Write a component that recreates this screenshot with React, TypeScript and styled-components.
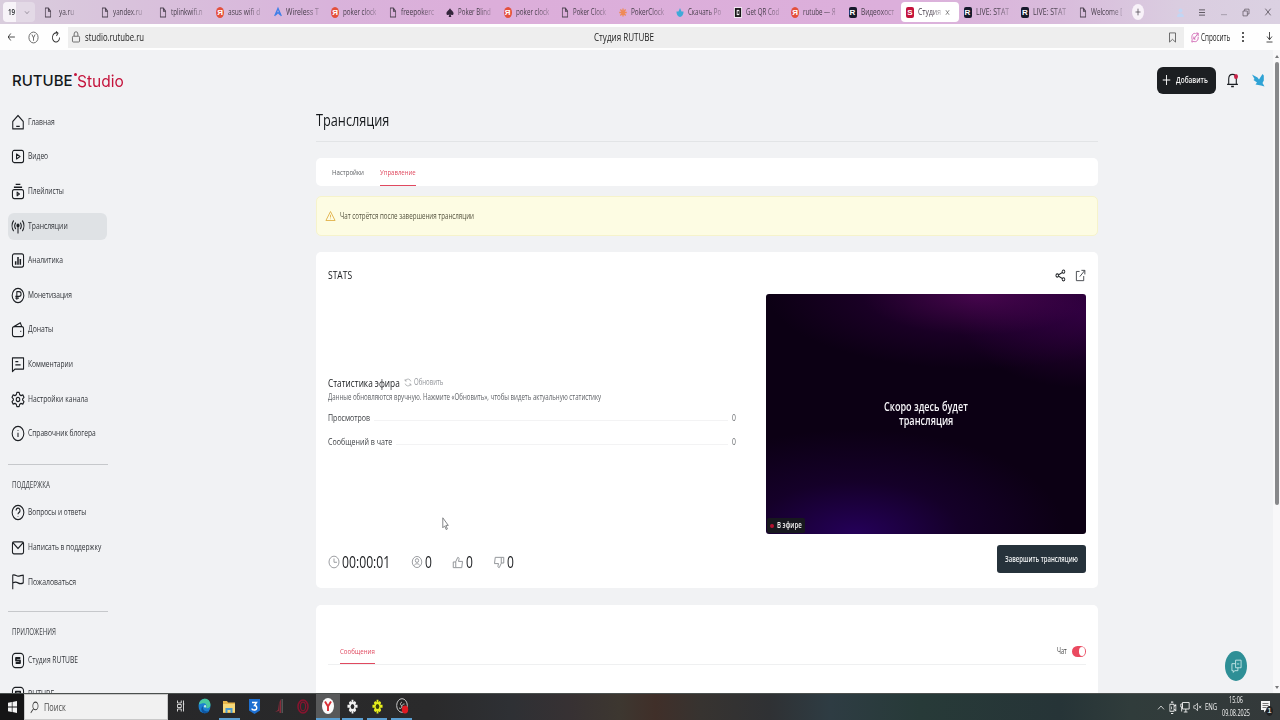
import React, { useLayoutEffect, useRef, useState } from "react";
import styled, { createGlobalStyle } from "styled-components";

const GlobalStyle = createGlobalStyle`
  *, *::before, *::after { box-sizing: border-box; }
  html, body { margin: 0; padding: 0; }
  body { width: 1280px; height: 720px; overflow: hidden; background: #f1f2f4; font-family: "Open Sans", "Noto Sans", sans-serif; }
`;

/* ---------- condensed text ---------- */

const FitBox = styled.span<{ $w: number }>`
  display: flex;
  align-items: center;
  flex: none;
  width: ${(p) => p.$w}px;
  overflow: visible;
`;

const FitInner = styled.span<{ $size: number; $color: string; $weight: number; $font?: string }>`
  display: block;
  flex: none;
  white-space: nowrap;
  transform-origin: 0 50%;
  font-size: ${(p) => p.$size}px;
  line-height: 1.2;
  font-weight: ${(p) => p.$weight};
  color: ${(p) => p.$color};
  font-family: ${(p) => p.$font || "inherit"};
`;

type TextProps = {
  w: number;
  size?: number;
  color?: string;
  weight?: number;
  font?: string;
  children: string;
};

function Text({ w, size = 9, color = "#24272b", weight = 400, font, children }: TextProps) {
  const ref = useRef<HTMLSpanElement>(null);
  const [k, setK] = useState(0.76);
  useLayoutEffect(() => {
    if (ref.current && ref.current.offsetWidth) {
      setK(w / ref.current.offsetWidth);
    }
  }, [w, children]);
  return (
    <FitBox $w={w}>
      <FitInner ref={ref} $size={size} $color={color} $weight={weight} $font={font} style={{ transform: `scaleX(${k})` }}>
        {children}
      </FitInner>
    </FitBox>
  );
}

/* ---------- icons ---------- */

const Svg = styled.svg`
  display: block;
  flex: none;
  overflow: visible;
`;

type IconProps = { name: string; w?: number; h?: number; color?: string; sw?: number };

const glyphs: Record<string, React.ReactNode> = {
  home: <path d="M3 21V10.500L12 2l9 8.500V21zM9 17.500h6" />,
  video: (
    <>
      <rect x="2.500" y="3.500" width="19" height="17" rx="3" />
      <path d="M9.500 8.500v7l6-3.500z" />
    </>
  ),
  playlist: (
    <>
      <rect x="2.500" y="9.500" width="19" height="12.500" rx="3" />
      <path d="M5 6h14M8 2h8M10.500 13v5l4-2.500z" />
    </>
  ),
  broadcast: (
    <>
      <path d="M4.500 3.500a12 12 0 0 0 0 15M19.500 3.500a12 12 0 0 1 0 15M8.200 6.500a7 7 0 0 0 0 9M15.800 6.500a7 7 0 0 1 0 9M12 12v10" />
      <circle cx="12" cy="10.500" r="1.800" fill="currentColor" />
    </>
  ),
  chart: (
    <>
      <rect x="2.500" y="2.500" width="19" height="19" rx="3" />
      <path d="M8 18v-5M12 18V7M16 18v-8" strokeWidth="2.600" />
    </>
  ),
  ruble: (
    <>
      <circle cx="12" cy="12" r="10" />
      <path d="M10 18V6.500h4a3.300 3.300 0 0 1 0 6.600H7.500M7.500 15.800h6" />
    </>
  ),
  wallet: (
    <>
      <rect x="2.500" y="8" width="19" height="14" rx="3" />
      <path d="M5 8l11-5.500 2.500 5.500M16 14.500h1.500" />
    </>
  ),
  comment: <path d="M2.500 22V2.500h19v16H7zM7.500 8h5M7.500 12.500h9" />,
  gear: (
    <>
      <path d="M10 2h4l.8 3.200 2.400 1.300 3.100-1 2 3.500-2.400 2.200v1.600l2.400 2.200-2 3.500-3.100-1-2.400 1.300L14 22h-4l-.8-3.200-2.400-1.300-3.100 1-2-3.500 2.400-2.200v-1.600L1.700 9l2-3.500 3.100 1 2.400-1.300z" />
      <circle cx="12" cy="12" r="3" />
    </>
  ),
  info: (
    <>
      <circle cx="12" cy="12" r="10" />
      <path d="M12 11v6M12 7.200v1" />
    </>
  ),
  help: (
    <>
      <circle cx="12" cy="12" r="10" />
      <path d="M8.800 9.200a3.300 3.300 0 1 1 4.700 2.900c-1.200.6-1.500 1-1.500 2.200M12 17v.8" />
    </>
  ),
  mail: (
    <>
      <rect x="2.500" y="4" width="19" height="17" rx="2.500" />
      <path d="M3 5l9 8.500L21 5" />
    </>
  ),
  flag: <path d="M3 23V3c4-1.500 6 1.500 9 1.500S18 3 21 3v11c-3 1.500-6 1.500-9 0s-5-1.500-9 0" />,
  appS: (
    <>
      <rect x="2.500" y="2" width="19" height="20" rx="5" />
      <path d="M16 8.500H8.500v3.500h7v3.500H8" strokeWidth="2.800" />
    </>
  ),
  appR: (
    <>
      <rect x="2.500" y="2" width="19" height="20" rx="5" />
      <path d="M8 16V8h8v4H9l7 4" strokeWidth="2.600" />
    </>
  ),
  share: (
    <>
      <circle cx="5" cy="12" r="3" />
      <circle cx="18.500" cy="5" r="3" />
      <circle cx="18.500" cy="19" r="3" />
      <path d="M8 10.500l8-4M8 13.500l8 4" />
    </>
  ),
  external: <path d="M10 4.500H3V21.500h16V13M14 2.500h7.500V10M21 3L10.500 14" />,
  refresh: <path d="M20.500 9A9.200 9.200 0 0 0 4 7M3.500 3v5h5M3.500 15A9.200 9.200 0 0 0 20 17M20.500 21v-5h-5" />,
  clock: (
    <>
      <circle cx="12" cy="12" r="10" />
      <path d="M12 6v6.500h6" />
    </>
  ),
  viewer: (
    <>
      <circle cx="12" cy="12" r="9.500" />
      <circle cx="12" cy="9.500" r="3.300" />
      <path d="M6.500 18c1.500-4 9.500-4 11 0" />
    </>
  ),
  up: <path d="M7.500 21.500V10.500l4-8c2 0 3 1.500 2.500 3.500l-1 4h8l-1.500 11.500zM7.500 11h-5v10.500h5" />,
  down: <path d="M16.500 2.500v11l-4 8c-2 0-3-1.500-2.500-3.500l1-4H3L4.500 2.500zM16.500 13h5V2.500h-5" />,
  warn: <path d="M12 3L22 21H2zM12 9.500v5.500M12 17.300v1" />,
  bell: <path d="M2 18.500h20M5 18V10.500C5 6 8 3.500 12 3.500S19 6 19 10.500V18M9.500 21.800h5" />,
  plus: <path d="M12 2v20M2 12h20" />,
  page: <path d="M4 2h9l7 7v13H4zM13 2v7h7" />,
  back: <path d="M21 12H3M10 5l-7 7 7 7" />,
  reload: <path d="M20.500 12a8.500 8.500 0 1 1-6-8.200M12 1l5 3-4 5" />,
  lock: (
    <>
      <rect x="3.500" y="10.500" width="17" height="11.500" rx="2" />
      <path d="M7.500 10V6a4.500 4.500 0 0 1 9 0v4" />
    </>
  ),
  yabrowser: (
    <>
      <circle cx="12" cy="12" r="10" />
      <path d="M8.500 6.500l3.500 6 3.500-6M12 12.500V18" />
    </>
  ),
  bookmark: <path d="M4 2h16v20l-8-6-8 6z" />,
  ask: <path d="M14 3.500C8 1.500 2.500 5 2.500 12c0 2 .5 3 1 4l-1 6 6-1.500c8 2.500 14-3 13-10M9 15L21 3M15 2.500h6.500V9M8.500 10v5.500h5" />,
  download: <path d="M12 2v15M5.500 11l6.500 6.500 6.500-6.500M4 22h16" />,
  chev: <path d="M4 8l8 8 8-8" />,
  chevUp: <path d="M3 17l9-9 9 9" />,
  close: <path d="M4 4l16 16M20 4L4 20" />,
  menu: <path d="M3 5h18M3 12h18M3 19h18" />,
  min: <path d="M3 20h18" />,
  restore: <path d="M3 8h13v13H3zM8 8V3h13v13h-5" />,
  search: (
    <>
      <circle cx="14.500" cy="9" r="7" />
      <path d="M9.500 14L2 22" />
    </>
  ),
  tasks: <path d="M4 1v5h10V1M4 23v-5h10v5M4 9h10v6H4zM20 1v22M18 8h4" />,
  chats: <path d="M10 2h12v13h-4M10 2v13h8M9 8H2v12h3v3l3-3h7v-5M13 8.500h5" />,
  tray: <path d="M5 6h11v13H5zM16 10l5-3v11l-5-3M8 2h6M8 23h6M9 10v5" />,
  network: <path d="M6 3h16v13H6zM14 16v6M9 22h9M2 6h4v6H2zM4 12v9" />,
  mute: <path d="M2 9h4l6-6v18l-6-6H2zM16 9l6 6M22 9l-6 6" />,
};

function Icon({ name, w = 14, h = 17, color = "#1b1e22", sw = 1.8 }: IconProps) {
  return (
    <Svg width={w} height={h} viewBox="0 0 24 24" preserveAspectRatio="none" fill="none" stroke="currentColor" strokeWidth={sw} color={color} strokeLinejoin="round">
      {glyphs[name]}
    </Svg>
  );
}

/* ---------- browser chrome ---------- */

const Screen = styled.div`
  width: 1280px;
  height: 720px;
  display: flex;
  flex-direction: column;
  overflow: hidden;
  position: relative;
`;

const TabBar = styled.div`
  height: 24px;
  flex: none;
  display: flex;
  align-items: center;
  background: linear-gradient(90deg, #d9cddd 0, #d9c3dc 120px, #d9b3db 330px, #dcaeda 480px, #dcafdb 900px, #d9bcdc 1060px, #dacde0 1180px, #dbd1e2 1280px);
`;

const TabCounter = styled.div`
  width: 32px;
  height: 20px;
  margin: 0 3.5px 0 3px;
  border-radius: 4px;
  display: flex;
  align-items: center;
  gap: 9px;
  background: linear-gradient(90deg, #f7f3f8 13px, #e3d9e6 13px);
  padding-left: 5px;
`;

const Tab = styled.div<{ $active?: boolean }>`
  width: 57.5px;
  height: 20px;
  flex: none;
  display: flex;
  align-items: center;
  gap: 4px;
  padding-left: 5px;
  border-radius: 4px;
  background: ${(p) => (p.$active ? "#fff" : "transparent")};
`;

const Fade = styled.div<{ $w: number; $shift?: number }>`
  width: ${(p) => p.$w}px;
  margin-left: ${(p) => p.$shift || 0}px;
  flex: none;
  mask-image: linear-gradient(90deg, #000 60%, rgba(0, 0, 0, 0.35));
`;

const Badge = styled.span<{ $bg: string; $fg: string; $round?: boolean }>`
  width: 8px;
  height: 11px;
  flex: none;
  border-radius: ${(p) => (p.$round ? "50%" : "2px")};
  background: ${(p) => p.$bg};
  color: ${(p) => p.$fg};
  font: 700 8px/11px "Liberation Sans", sans-serif;
  text-align: center;
`;

const NewTab = styled.div`
  width: 12px;
  height: 16px;
  margin-left: 1px;
  border-radius: 50%;
  background: #f8f2f9;
  display: flex;
  align-items: center;
  justify-content: center;
`;

const WindowButtons = styled.div`
  margin-left: auto;
  display: flex;
  align-items: center;
  gap: 14px;
  padding-right: 8px;
`;

const AddressBar = styled.div`
  height: 26px;
  flex: none;
  display: flex;
  align-items: center;
  background: #fefefe;
`;

const NavButtons = styled.div`
  width: 68px;
  display: flex;
  align-items: center;
  gap: 12px;
  padding-left: 7px;
`;

const UrlField = styled.div`
  width: 1116px;
  height: 21px;
  display: flex;
  align-items: center;
  background: #eeeeee;
  padding: 0 7px 0 3px;
`;

const UrlLeft = styled.div`
  width: 523px;
  display: flex;
  align-items: center;
  gap: 4px;
`;

const PushRight = styled.div`
  margin-left: auto;
`;

const AddressTools = styled.div`
  flex: 1;
  display: flex;
  align-items: center;
  padding: 0 6px 0 7px;
  gap: 2px;
`;

const Dots = styled.div`
  display: flex;
  flex-direction: column;
  gap: 2px;
  margin-left: 10px;
  margin-right: auto;
`;

const Dot = styled.span<{ $c: string; $s: number }>`
  width: ${(p) => p.$s}px;
  height: ${(p) => p.$s + 0.5}px;
  border-radius: 50%;
  background: ${(p) => p.$c};
  flex: none;
`;

type FavKind = "page" | "ya" | "tplink" | "spade" | "sun" | "drop" | "qr" | "r" | "s";

const tabs: { fav: FavKind; label: string; w: number; active?: boolean; shift?: number }[] = [
  { fav: "page", label: "ya.ru", w: 15, shift: 3 },
  { fav: "page", label: "yandex.ru", w: 29 },
  { fav: "page", label: "tplinkwifi.n", w: 32 },
  { fav: "ya", label: "asus wifi d", w: 32 },
  { fav: "tplink", label: "Wireless T", w: 33 },
  { fav: "ya", label: "poker clock", w: 33 },
  { fav: "page", label: "freepokerc", w: 33 },
  { fav: "spade", label: "Poker Blind", w: 33 },
  { fav: "ya", label: "poker clock", w: 33 },
  { fav: "page", label: "Poker Clock", w: 33 },
  { fav: "sun", label: "PokerClock", w: 33 },
  { fav: "drop", label: "Скачать Po", w: 33 },
  { fav: "qr", label: "Get QR Cod", w: 33 },
  { fav: "ya", label: "rutube — Я", w: 33 },
  { fav: "r", label: "Видеохост", w: 33 },
  { fav: "s", label: "Студия", w: 23, active: true },
  { fav: "r", label: "LIVE: STAT", w: 33 },
  { fav: "r", label: "LIVE: STAT", w: 33 },
  { fav: "page", label: "Welcome [", w: 31 },
];

function Favicon({ kind }: { kind: FavKind }) {
  switch (kind) {
    case "page":
      return <Icon name="page" w={8} h={11} color="#4e4452" sw={2.2} />;
    case "ya":
      return <Badge $bg="#e4503c" $fg="#fff" $round>Я</Badge>;
    case "r":
      return <Badge $bg="#171a2b" $fg="#fff">R</Badge>;
    case "s":
      return <Badge $bg="#c4143c" $fg="#fff">S</Badge>;
    case "qr":
      return (
        <Svg width="8" height="11" viewBox="0 0 9 12">
          <rect width="9" height="12" fill="#f6f0f6" />
          <rect x="1" y="1" width="7" height="10" fill="#151515" />
          <rect x="3" y="3" width="3" height="6" fill="#f3eef3" />
          <rect x="4" y="4.500" width="1.500" height="3" fill="#222" />
        </Svg>
      );
    case "tplink":
      return (
        <Svg width="8" height="11" viewBox="0 0 9 12" fill="none" stroke="#3f7fe8" strokeWidth="1.500">
          <path d="M.8 10L4.500 1.500 8.200 10M2 8.500L4.500 6 7 8.500" />
        </Svg>
      );
    case "spade":
      return (
        <Svg width="8" height="11" viewBox="0 0 9 12" fill="#34263c">
          <path d="M4.500 1C5 3 8.500 4.500 8.500 7c0 1.800-2 2.400-3.300 1.300L6 11H3l.8-2.700C2.500 9.400.5 8.800.5 7 .5 4.500 4 3 4.500 1z" />
        </Svg>
      );
    case "sun":
      return (
        <Svg width="8" height="11" viewBox="0 0 9 12" stroke="#ef8a56" strokeWidth="1.500" fill="#f3a070">
          <path d="M4.500 1.500v9M.3 6h8.400M1.500 2.700l6 6.600M7.500 2.700l-6 6.600" />
        </Svg>
      );
    default:
      return (
        <Svg width="8" height="11" viewBox="0 0 9 12" fill="#3fa9d8">
          <path d="M.5 5h2.300L4.500 1l1.700 4h2.300c0 4-2 6-4 6s-4-2-4-6z" />
        </Svg>
      );
  }
}

/* ---------- page ---------- */

const PageArea = styled.div`
  height: 643px;
  flex: none;
  display: flex;
  background: #f1f2f4;
  overflow: hidden;
`;

const Content = styled.div`
  width: 1273px;
  flex: none;
`;

const Scrollbar = styled.div`
  width: 7px;
  background: #f8f8f9;
  display: flex;
  flex-direction: column;
  align-items: center;
  justify-content: space-between;
  padding: 5px 0 4px;
`;

const Thumb = styled.div`
  width: 4px;
  height: 443px;
  border-radius: 2px;
  background: #87888a;
  margin: 4px 0 auto;
`;

const Arrow = styled.span<{ $down?: boolean }>`
  border: 2.5px solid transparent;
  border-${(p) => (p.$down ? "top" : "bottom")}: 3.5px solid #77787a;
  border-${(p) => (p.$down ? "bottom" : "top")}: 0;
`;

const Header = styled.header`
  height: 55px;
  display: flex;
  align-items: center;
  padding: 5px 8px 0 12px;
`;

const Logo = styled.div`
  display: flex;
  align-items: center;
  padding-top: 3px;
`;

const LogoDot = styled.span`
  width: 3px;
  height: 3px;
  border-radius: 50%;
  background: #c4143c;
  margin: 0 0.5px 13px 0.5px;
`;

const HeaderActions = styled.div`
  margin-left: auto;
  display: flex;
  align-items: center;
`;

const AddButton = styled.button`
  width: 59px;
  height: 27px;
  border: 0;
  border-radius: 6px;
  background: #1c1f22;
  display: flex;
  align-items: center;
  gap: 5px;
  padding: 0 0 0 5px;
  font-family: inherit;
`;

const BellWrap = styled.div`
  position: relative;
  margin: 0 13px 0 10px;
`;

const BellDot = styled.span`
  position: absolute;
  right: 1px;
  top: 2px;
  width: 4px;
  height: 5px;
  border-radius: 50%;
  background: #c92248;
`;

const Body = styled.div`
  display: flex;
  align-items: flex-start;
`;

const Sidebar = styled.nav`
  width: 100px;
  margin-left: 8px;
  flex: none;
`;

const NavItem = styled.div<{ $active?: boolean }>`
  width: 99px;
  height: 27px;
  margin: 3.8px 0;
  padding-left: 3px;
  display: flex;
  align-items: center;
  gap: 3px;
  border-radius: 6px;
  background: ${(p) => (p.$active ? "#dfe2e5" : "transparent")};
`;

const Divider = styled.div`
  height: 1px;
  background: #c6c8cb;
`;

const NavGroup = styled.div<{ $top: number }>`
  display: flex;
  flex-direction: column;
  margin-top: ${(p) => p.$top}px;
`;

const NavHeading = styled.div`
  height: 30.5px;
  padding: 15px 0 0 4px;
`;

const Main = styled.main`
  width: 782px;
  margin-left: 208px;
  display: flex;
  flex-direction: column;
`;

const TitleRow = styled.div`
  height: 37px;
  padding-top: 6px;
  border-bottom: 1px solid #e2e4e6;
`;

const TabsCard = styled.div`
  height: 28px;
  margin-top: 16px;
  border-radius: 5px;
  background: #fff;
  display: flex;
  gap: 16px;
  padding-left: 16px;
`;

const PageTab = styled.div<{ $active?: boolean }>`
  display: flex;
  align-items: center;
  border-bottom: 1px solid ${(p) => (p.$active ? "#e0495f" : "transparent")};
`;

const Notice = styled.div`
  height: 40px;
  margin-top: 10px;
  border: 1px solid #f6f3cb;
  border-radius: 5px;
  background: #fdfce3;
  display: flex;
  align-items: center;
  gap: 4px;
  padding-left: 8px;
`;

const StatsCard = styled.section`
  height: 336px;
  margin-top: 16px;
  border-radius: 5px;
  background: #fff;
  padding: 0 12px;
`;

const CardHeader = styled.div`
  height: 42px;
  display: flex;
  align-items: center;
  justify-content: space-between;
  padding-top: 3px;
`;

const CardActions = styled.div`
  display: flex;
  gap: 9px;
  padding-top: 2px;
`;

const Columns = styled.div`
  display: flex;
  justify-content: space-between;
`;

const StatsColumn = styled.div`
  width: 408px;
  height: 240px;
  padding-top: 81px;
`;

const StatsTitle = styled.div`
  display: flex;
  align-items: center;
  gap: 4px;
  height: 15px;
`;

const RefreshButton = styled.div`
  display: flex;
  align-items: center;
  gap: 2px;
`;

const StatsHint = styled.div`
  height: 16px;
  padding-top: 2px;
`;

const StatRow = styled.div`
  height: 24px;
  display: flex;
  align-items: center;
  gap: 4px;
`;

const Leader = styled.span`
  flex: 1;
  height: 1px;
  margin-top: 4px;
  background: #f3f3f4;
`;

const Player = styled.div`
  width: 320px;
  height: 240px;
  border-radius: 3px;
  background:
    radial-gradient(ellipse 210px 75px at 66% 0%, rgba(92, 8, 98, 0.72), rgba(60, 0, 80, 0.28) 55%, transparent),
    radial-gradient(ellipse 130px 75px at 100% 8%, rgba(64, 0, 82, 0.62), transparent),
    radial-gradient(ellipse 210px 105px at 28% 100%, rgba(42, 0, 104, 0.82), rgba(34, 0, 72, 0.4) 50%, transparent),
    #0c0014;
  display: flex;
  flex-direction: column;
  justify-content: space-between;
  align-items: center;
  padding-top: 106px;
`;

const PlayerCaption = styled.div`
  display: flex;
  flex-direction: column;
  align-items: center;
`;

const LiveBadge = styled.div`
  align-self: flex-start;
  width: 38px;
  height: 15px;
  margin: 0 0 1px 1px;
  border-radius: 2px;
  background: #17181e;
  display: flex;
  align-items: center;
  gap: 3px;
  padding-left: 3px;
`;

const CardFooter = styled.div`
  height: 54px;
  display: flex;
  justify-content: space-between;
  align-items: flex-start;
  padding-top: 11px;
`;

const Metrics = styled.div`
  display: flex;
  align-items: center;
  padding-top: 8px;
`;

const Metric = styled.div<{ $w: number }>`
  width: ${(p) => p.$w}px;
  display: flex;
  align-items: center;
  gap: 2px;
`;

const EndButton = styled.button`
  width: 89px;
  height: 28px;
  border: 0;
  border-radius: 3px;
  background: #26323b;
  padding: 0 0 0 8px;
  display: flex;
  align-items: center;
  font-family: inherit;
`;

const ChatCard = styled.section`
  height: 120px;
  margin-top: 17px;
  border-radius: 5px 5px 0 0;
  background: #fff;
  padding: 33px 12px 0;
`;

const ChatHeader = styled.div`
  height: 27px;
  border-bottom: 1px solid #eff0f1;
  display: flex;
  align-items: stretch;
  justify-content: space-between;
  padding-left: 12px;
`;

const ChatSwitch = styled.div`
  display: flex;
  align-items: center;
  gap: 5px;
`;

const Toggle = styled.span`
  width: 14px;
  height: 11px;
  border-radius: 6px;
  background: #ea4a60;
  display: flex;
  justify-content: flex-end;
  align-items: center;
  padding-right: 1px;
`;

const Knob = styled.span`
  width: 6.5px;
  height: 9px;
  border-radius: 50%;
  background: #fff;
`;

const HelpBubble = styled.div`
  position: absolute;
  left: 1225px;
  top: 651px;
  width: 22px;
  height: 30px;
  border-radius: 50%;
  background: #2e8f96;
  display: flex;
  align-items: center;
  justify-content: center;
`;

const Pointer = styled.div`
  position: absolute;
  left: 442px;
  top: 517px;
`;

/* ---------- taskbar ---------- */

const Taskbar = styled.div`
  height: 27px;
  flex: none;
  display: flex;
  align-items: stretch;
  border-top: 1px solid #4b504e;
  background: linear-gradient(90deg, #262628 0, #2a2a2b 430px, #2e3034 510px, #373133 570px, #3d3730 620px, #402f29 655px, #373330 700px, #2f3134 770px, #2e3c43 830px, #273a38 920px, #263437 1060px, #303c3b 1130px, #34393a 1280px);
`;

const StartButton = styled.div`
  width: 24px;
  background: #151516;
  display: flex;
  align-items: center;
  justify-content: center;
`;

const SearchBox = styled.div`
  width: 144px;
  background: #f1f1f1;
  border: 1px solid #c9c9c9;
  display: flex;
  align-items: center;
  gap: 5px;
  padding-left: 5px;
`;

const TaskItem = styled.div<{ $open?: boolean; $focus?: boolean }>`
  width: ${(p) => (p.$open ? 20.6 : 24.6)}px;
  margin: ${(p) => (p.$open ? "0 2px" : "0")};
  display: flex;
  align-items: center;
  justify-content: center;
  background: ${(p) => (p.$focus ? "#58595a" : "transparent")};
  border-bottom: 2px solid ${(p) => (p.$open || p.$focus ? "#5b9fd2" : "transparent")};
`;

const Tray = styled.div`
  margin-left: auto;
  display: flex;
  align-items: center;
  gap: 3px;
`;

const ClockBox = styled.div`
  width: 30px;
  margin: 0 7px 0 1px;
  display: flex;
  flex-direction: column;
  align-items: center;
  gap: 1.5px;
`;

const NoteWrap = styled.div`
  position: relative;
  margin-right: 10px;
`;

const NoteCount = styled.span`
  position: absolute;
  left: 5px;
  top: 5px;
  width: 7px;
  height: 10px;
  border-radius: 50%;
  background: #202122;
  color: #fff;
  font: 8px/10px "Liberation Sans", sans-serif;
  text-align: center;
`;

const mainNav = [
  { icon: "home", label: "Главная", w: 27 },
  { icon: "video", label: "Видео", w: 20 },
  { icon: "playlist", label: "Плейлисты", w: 36 },
  { icon: "broadcast", label: "Трансляции", w: 40, active: true },
  { icon: "chart", label: "Аналитика", w: 35 },
  { icon: "ruble", label: "Монетизация", w: 44 },
  { icon: "wallet", label: "Донаты", w: 25 },
  { icon: "comment", label: "Комментарии", w: 45 },
  { icon: "gear", label: "Настройки канала", w: 60 },
  { icon: "info", label: "Справочник блогера", w: 68 },
];

const supportNav = [
  { icon: "help", label: "Вопросы и ответы", w: 58 },
  { icon: "mail", label: "Написать в поддержку", w: 73 },
  { icon: "flag", label: "Пожаловаться", w: 48 },
];

const appNav = [
  { icon: "appS", label: "Студия RUTUBE", w: 50 },
  { icon: "appR", label: "RUTUBE", w: 26 },
];

function NavList({ items }: { items: { icon: string; label: string; w: number; active?: boolean }[] }) {
  return (
    <>
      {items.map((it) => (
        <NavItem key={it.label} $active={it.active}>
          <Icon name={it.icon} />
          <Text w={it.w} size={9} color="#303338">{it.label}</Text>
        </NavItem>
      ))}
    </>
  );
}

const Gear = ({ color, back }: { color: string; back: string }) => (
  <Svg width="11" height="15" viewBox="0 0 24 24" preserveAspectRatio="none">
    <path d="M10 1h4v4l3-2 3 3-2 3h5v5h-5l2 4-3 3-3-2v4h-4v-4l-3 2-3-3 2-4H1V9h5L4 6l3-3 3 2z" fill={color} />
    <circle cx="12" cy="12" r="4" fill={back} />
  </Svg>
);

export default function App() {
  return (
    <Screen>
      <GlobalStyle />
      <TabBar>
        <TabCounter>
          <Text w={7} size={9} weight={600}>19</Text>
          <Icon name="chev" w={6} h={7} color="#77707c" sw={2.5} />
        </TabCounter>
        {tabs.map((t, i) => (
          <Tab key={i} $active={t.active}>
            <Favicon kind={t.fav} />
            <Fade $w={t.w} $shift={t.shift}>
              <Text w={t.w} size={9.5} color="#463d4a">{t.label}</Text>
            </Fade>
            {t.active && <Icon name="close" w={5} h={7} color="#555" sw={2.6} />}
          </Tab>
        ))}
        <NewTab>
          <Icon name="plus" w={6} h={8} color="#443e47" sw={2.4} />
        </NewTab>
        <WindowButtons>
          <Svg width="7" height="9" viewBox="0 0 7 9" fill="#c3d6f4">
            <circle cx="3.500" cy="2.500" r="2" />
            <path d="M0 9c0-5 7-5 7 0z" />
          </Svg>
          <Icon name="menu" w={8} h={9} color="#3f3a42" sw={2.2} />
          <Icon name="min" w={8} h={8} color="#8d8592" sw={2} />
          <Icon name="restore" w={8} h={9} color="#5a535e" sw={2} />
          <Icon name="close" w={8} h={10} color="#4c464f" sw={2} />
        </WindowButtons>
      </TabBar>

      <AddressBar>
        <NavButtons>
          <Icon name="back" w={9} h={12} color="#333" sw={2} />
          <Icon name="yabrowser" w={11} h={13} color="#555" sw={1.7} />
          <Icon name="reload" w={10} h={13} color="#333" sw={2} />
        </NavButtons>
        <UrlField>
          <UrlLeft>
            <Icon name="lock" w={10} h={12} color="#666" sw={2} />
            <Text w={59} size={10.5} color="#222">studio.rutube.ru</Text>
          </UrlLeft>
          <Text w={60} size={11} color="#1d1d1d">Студия RUTUBE</Text>
          <PushRight>
            <Icon name="bookmark" w={9} h={11} color="#555" sw={2} />
          </PushRight>
        </UrlField>
        <AddressTools>
          <Icon name="ask" w={8} h={11} color="#c94fa8" sw={2} />
          <Text w={29} size={10} color="#222">Спросить</Text>
          <Dots>
            <Dot $c="#333" $s={1.5} />
            <Dot $c="#333" $s={1.5} />
            <Dot $c="#333" $s={1.5} />
          </Dots>
          <Icon name="download" w={9} h={12} color="#333" sw={2} />
        </AddressTools>
      </AddressBar>

      <PageArea>
        <Content>
          <Header>
            <Logo>
              <Text w={61} size={15} weight={500} color="#14181b" font="Inter, sans-serif">RUTUBE</Text>
              <LogoDot />
              <Text w={47} size={16.5} weight={400} color="#c4143c" font="Inter, sans-serif">Studio</Text>
            </Logo>
            <HeaderActions>
              <AddButton>
                <Icon name="plus" w={9} h={12} color="#fff" sw={2.4} />
                <Text w={32} size={9.5} weight={600} color="#f4f4f4">Добавить</Text>
              </AddButton>
              <BellWrap>
                <Icon name="bell" w={13} h={16} sw={2} />
                <BellDot />
              </BellWrap>
              <Svg width="13" height="15" viewBox="0 0 13 15" fill="#2fa3d5">
                <path d="M0 1.500l5.500 3 1.500 2L10.500 1l1.300 1.500v5l-1.300 2.500 2 3.500-3.500-1-5.500-1 1.500-2L1.500 7l1-1L0 1.500z" />
              </Svg>
            </HeaderActions>
          </Header>
          <Body>
            <Sidebar>
              <NavGroup $top={0}>
                <NavList items={mainNav} />
              </NavGroup>
              <NavGroup $top={13}>
                <Divider />
                <NavHeading>
                  <Text w={38} size={9} color="#3b3e43">ПОДДЕРЖКА</Text>
                </NavHeading>
                <NavList items={supportNav} />
              </NavGroup>
              <NavGroup $top={12}>
                <Divider />
                <NavHeading>
                  <Text w={44} size={9} color="#3b3e43">ПРИЛОЖЕНИЯ</Text>
                </NavHeading>
                <NavList items={appNav} />
              </NavGroup>
            </Sidebar>
            <Main>
              <TitleRow>
                <Text w={73} size={15.5} color="#16191c">Трансляция</Text>
              </TitleRow>
              <TabsCard>
                <PageTab>
                  <Text w={32} size={8} color="#5a5d61">Настройки</Text>
                </PageTab>
                <PageTab $active>
                  <Text w={36} size={8} color="#e0495f">Управление</Text>
                </PageTab>
              </TabsCard>
              <Notice>
                <Icon name="warn" w={11} h={12} color="#e0ad42" sw={1.8} />
                <Text w={134} size={8.5} color="#55533f">Чат сотрётся после завершения трансляции</Text>
              </Notice>
              <StatsCard>
                <CardHeader>
                  <Text w={24} size={11} color="#17191c">STATS</Text>
                  <CardActions>
                    <Icon name="share" w={11} h={13} sw={1.9} />
                    <Icon name="external" w={11} h={13} color="#3c4045" sw={1.8} />
                  </CardActions>
                </CardHeader>
                <Columns>
                  <StatsColumn>
                    <StatsTitle>
                      <Text w={72} size={11} weight={500} color="#17191c">Статистика эфира</Text>
                      <RefreshButton>
                        <Icon name="refresh" w={8} h={9} color="#8f9296" sw={1.8} />
                        <Text w={29} size={8.5} color="#909398">Обновить</Text>
                      </RefreshButton>
                    </StatsTitle>
                    <StatsHint>
                      <Text w={273} size={8.5} color="#5f6267">Данные обновляются вручную. Нажмите «Обновить», чтобы видеть актуальную статистику</Text>
                    </StatsHint>
                    <StatRow>
                      <Text w={42} size={9.5} color="#3e4145">Просмотров</Text>
                      <Leader />
                      <Text w={4} size={8.5} color="#65686c">0</Text>
                    </StatRow>
                    <StatRow>
                      <Text w={64} size={9.5} color="#3e4145">Сообщений в чате</Text>
                      <Leader />
                      <Text w={4} size={8.5} color="#65686c">0</Text>
                    </StatRow>
                  </StatsColumn>
                  <Player>
                    <PlayerCaption>
                      <Text w={84} size={12} weight={600} color="#f7f5f9">Скоро здесь будет</Text>
                      <Text w={54} size={12} weight={600} color="#f7f5f9">трансляция</Text>
                    </PlayerCaption>
                    <LiveBadge>
                      <Dot $c="#b3122f" $s={3.5} />
                      <Text w={25} size={8.5} weight={600} color="#f0f0f0">В эфире</Text>
                    </LiveBadge>
                  </Player>
                </Columns>
                <CardFooter>
                  <Metrics>
                    <Metric $w={83}>
                      <Icon name="clock" w={12} h={14} color="#8d9094" sw={1.6} />
                      <Text w={48} size={15.5} color="#17191c">00:00:01</Text>
                    </Metric>
                    <Metric $w={41}>
                      <Icon name="viewer" w={12} h={14} color="#8d9094" sw={1.6} />
                      <Text w={7} size={15.5} color="#17191c">0</Text>
                    </Metric>
                    <Metric $w={41}>
                      <Icon name="up" w={12} h={13} color="#8d9094" sw={1.8} />
                      <Text w={7} size={15.5} color="#17191c">0</Text>
                    </Metric>
                    <Metric $w={41}>
                      <Icon name="down" w={12} h={13} color="#8d9094" sw={1.8} />
                      <Text w={7} size={15.5} color="#17191c">0</Text>
                    </Metric>
                  </Metrics>
                  <EndButton>
                    <Text w={73} size={8.5} weight={600} color="#f1f3f4">Завершить трансляцию</Text>
                  </EndButton>
                </CardFooter>
              </StatsCard>
              <ChatCard>
                <ChatHeader>
                  <PageTab $active>
                    <Text w={35} size={8} color="#e0495f">Сообщения</Text>
                  </PageTab>
                  <ChatSwitch>
                    <Text w={10} size={8.5} color="#444">Чат</Text>
                    <Toggle>
                      <Knob />
                    </Toggle>
                  </ChatSwitch>
                </ChatHeader>
              </ChatCard>
            </Main>
          </Body>
        </Content>
        <Scrollbar>
          <Arrow />
          <Thumb />
          <Arrow $down />
        </Scrollbar>
      </PageArea>

      <Taskbar>
        <StartButton>
          <Svg width="9" height="12" viewBox="0 0 9 12" fill="#f4f4f4">
            <path d="M0 1.800L3.800 1v4.600H0zM4.500.9L9 0v5.600H4.500zM0 6.400h3.800V11L0 10.200zM4.500 6.400H9V12l-4.500-.9z" />
          </Svg>
        </StartButton>
        <SearchBox>
          <Icon name="search" w={9} h={13} color="#3c3c3c" sw={2} />
          <Text w={22} size={11} color="#4b4b4b">Поиск</Text>
        </SearchBox>
        <TaskItem>
          <Icon name="tasks" w={9} h={12} color="#e8e8e8" sw={2} />
        </TaskItem>
        <TaskItem>
          <Svg width="13" height="16" viewBox="0 0 24 24" preserveAspectRatio="none">
            <circle cx="12" cy="12" r="11" fill="#1c7fd0" />
            <path d="M1.500 10C3 3 9 1 13 1c6 0 10 4 10 9 0 4-4 6-8 5 2-3 0-7-4-7S4 9 1.500 10z" fill="#49c9a0" />
            <path d="M9 12c-1 5 3 9 10 8 1.500-.5 2-1 2-1-2 3-5 4-9 4-6 0-8-8-3-11z" fill="#0f559f" />
            <circle cx="13" cy="12.500" r="2" fill="#bfe9e6" />
          </Svg>
        </TaskItem>
        <TaskItem $open>
          <Svg width="12" height="13" viewBox="0 0 12 13">
            <path d="M0 1h4l1 1.500h7V13H0z" fill="#e8b64a" />
            <path d="M0 4h12v8H0z" fill="#f6d97a" />
            <path d="M2.500 13V8h7v5h-2v-3h-3v3z" fill="#4c9cd2" />
          </Svg>
        </TaskItem>
        <TaskItem>
          <Svg width="11" height="15" viewBox="0 0 11 15">
            <path d="M0 0h11v11.500L5.500 15 0 11.500z" fill="#1d6fd1" />
            <path d="M3 3.500h4.500L5.500 6.500c3 0 3 4.500 0 4.500-1.500 0-2.500-.5-2.500-1.500" fill="none" stroke="#fff" strokeWidth="1.400" />
          </Svg>
        </TaskItem>
        <TaskItem>
          <Svg width="9" height="14" viewBox="0 0 9 14">
            <path d="M7 0v14H5.500V3zM5 4v8L1 13l3-2z" fill="#8a2a3a" />
            <path d="M7.500 0H9v14H7.500z" fill="#555" />
          </Svg>
        </TaskItem>
        <TaskItem>
          <Svg width="12" height="15" viewBox="0 0 12 15" fill="none" stroke="#86142f">
            <ellipse cx="6" cy="7.500" rx="5" ry="6.500" strokeWidth="1.600" />
            <ellipse cx="6" cy="7.500" rx="2.600" ry="4.300" strokeWidth="1.200" />
          </Svg>
        </TaskItem>
        <TaskItem $focus>
          <Svg width="12" height="16" viewBox="0 0 12 16">
            <ellipse cx="6" cy="8" rx="6" ry="8" fill="#fbfbfb" />
            <path d="M3 3.500L6 8.500l3-5M6 8.500V13" fill="none" stroke="#d92f36" strokeWidth="1.900" />
          </Svg>
        </TaskItem>
        <TaskItem $open>
          <Gear color="#f2f2f2" back="#2a2a2b" />
        </TaskItem>
        <TaskItem $open>
          <Gear color="#e6ee1c" back="#39400c" />
        </TaskItem>
        <TaskItem $open>
          <Svg width="12" height="16" viewBox="0 0 12 16">
            <ellipse cx="6" cy="7.500" rx="5.300" ry="6.800" fill="#222" stroke="#c9c9c9" strokeWidth="1" />
            <path d="M6 4c-2 1-2 3 0 4M3 10c2 1 3 0 3-2M8.500 6C7 6 6 7 6 8" stroke="#c9c9c9" fill="none" />
            <ellipse cx="9" cy="11.500" rx="3.200" ry="4" fill="#e01a22" />
          </Svg>
        </TaskItem>
        <Tray>
          <Icon name="chevUp" w={8} h={9} color="#eee" sw={2.2} />
          <Icon name="tray" w={9} h={13} color="#eee" sw={2} />
          <Icon name="network" w={10} h={12} color="#eee" sw={2} />
          <Icon name="mute" w={9} h={10} color="#ddd" sw={2} />
          <Text w={12} size={9} color="#f2f2f2">ENG</Text>
          <ClockBox>
            <Text w={14} size={9} color="#f2f2f2">15:06</Text>
            <Text w={28} size={9} color="#f2f2f2">09.08.2025</Text>
          </ClockBox>
          <NoteWrap>
            <Svg width="9" height="12" viewBox="0 0 9 12">
              <path d="M0 0h9v9H5l-2 2.500V9H0z" fill="#f4f4f4" />
              <path d="M1.500 2.500h6M1.500 4.500h6M1.500 6.500h4" stroke="#555" strokeWidth=".8" />
            </Svg>
            <NoteCount>1</NoteCount>
          </NoteWrap>
        </Tray>
      </Taskbar>

      <HelpBubble>
        <Icon name="chats" w={11} h={14} color="#d2eeee" sw={1.6} />
      </HelpBubble>
      <Pointer>
        <Svg width="7" height="14" viewBox="0 0 7 14" fill="#fff" stroke="#77797c" strokeWidth=".9">
          <path d="M.8.8v10l1.900-1.900 1.500 3.700 1.200-.6-1.500-3.600h2.400z" />
        </Svg>
      </Pointer>
    </Screen>
  );
}
